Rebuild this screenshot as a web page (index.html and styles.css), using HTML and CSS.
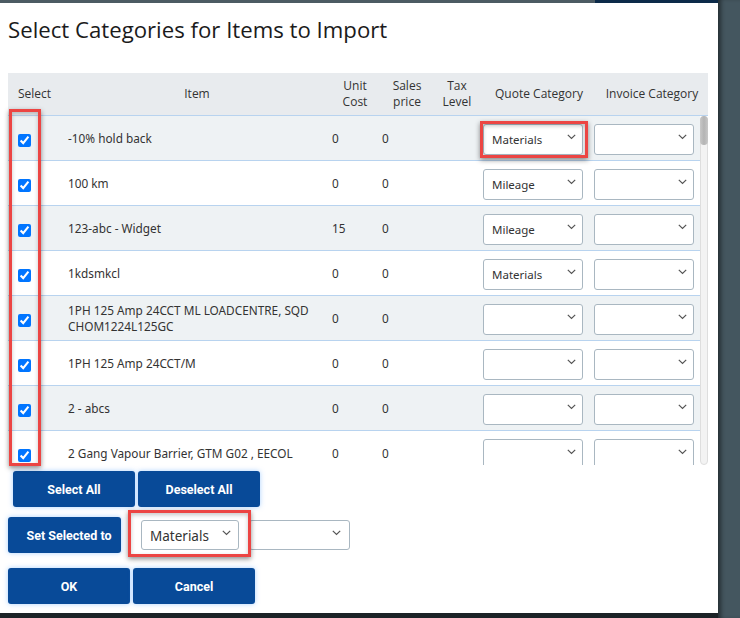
FILE: index.html
```html
<!DOCTYPE html>
<html>
<head>
<meta charset="utf-8">
<link rel="stylesheet" href="styles.css">
</head>
<body>
<div class="screen">
  <div class="main-col">
    <div class="topstrip"></div>
    <div class="dialog">
      <h1 class="title">Select Categories for Items to Import</h1>
      <div class="table">
        <div class="thead">
          <div class="th th-left">Select</div>
          <div class="th">Item</div>
          <div class="th">Unit<br>Cost</div>
          <div class="th">Sales<br>price</div>
          <div class="th">Tax<br>Level</div>
          <div class="th">Quote Category</div>
          <div class="th">Invoice Category</div>
          <div class="th"></div>
        </div>
        <div class="tbody">
          <div class="rows">
            <div class="row">
              <div class="c-sel"><input type="checkbox" checked></div>
              <div class="c-item">-10% hold back</div>
              <div class="c-num">0</div>
              <div class="c-num">0</div>
              <div class="c-num"></div>
              <div class="c-q"><div class="sel"><span>Materials</span><svg width="9" height="6" viewBox="0 0 9 6"><path d="M0.8 0.8 L4.5 4.5 L8.2 0.8" fill="none" stroke="#555" stroke-width="1.2"/></svg></div></div>
              <div class="c-i"><div class="sel"><span></span><svg width="9" height="6" viewBox="0 0 9 6"><path d="M0.8 0.8 L4.5 4.5 L8.2 0.8" fill="none" stroke="#555" stroke-width="1.2"/></svg></div></div>
            </div>
            <div class="row">
              <div class="c-sel"><input type="checkbox" checked></div>
              <div class="c-item">100 km</div>
              <div class="c-num">0</div>
              <div class="c-num">0</div>
              <div class="c-num"></div>
              <div class="c-q"><div class="sel"><span>Mileage</span><svg width="9" height="6" viewBox="0 0 9 6"><path d="M0.8 0.8 L4.5 4.5 L8.2 0.8" fill="none" stroke="#555" stroke-width="1.2"/></svg></div></div>
              <div class="c-i"><div class="sel"><span></span><svg width="9" height="6" viewBox="0 0 9 6"><path d="M0.8 0.8 L4.5 4.5 L8.2 0.8" fill="none" stroke="#555" stroke-width="1.2"/></svg></div></div>
            </div>
            <div class="row">
              <div class="c-sel"><input type="checkbox" checked></div>
              <div class="c-item">123-abc - Widget</div>
              <div class="c-num">15</div>
              <div class="c-num">0</div>
              <div class="c-num"></div>
              <div class="c-q"><div class="sel"><span>Mileage</span><svg width="9" height="6" viewBox="0 0 9 6"><path d="M0.8 0.8 L4.5 4.5 L8.2 0.8" fill="none" stroke="#555" stroke-width="1.2"/></svg></div></div>
              <div class="c-i"><div class="sel"><span></span><svg width="9" height="6" viewBox="0 0 9 6"><path d="M0.8 0.8 L4.5 4.5 L8.2 0.8" fill="none" stroke="#555" stroke-width="1.2"/></svg></div></div>
            </div>
            <div class="row">
              <div class="c-sel"><input type="checkbox" checked></div>
              <div class="c-item">1kdsmkcl</div>
              <div class="c-num">0</div>
              <div class="c-num">0</div>
              <div class="c-num"></div>
              <div class="c-q"><div class="sel"><span>Materials</span><svg width="9" height="6" viewBox="0 0 9 6"><path d="M0.8 0.8 L4.5 4.5 L8.2 0.8" fill="none" stroke="#555" stroke-width="1.2"/></svg></div></div>
              <div class="c-i"><div class="sel"><span></span><svg width="9" height="6" viewBox="0 0 9 6"><path d="M0.8 0.8 L4.5 4.5 L8.2 0.8" fill="none" stroke="#555" stroke-width="1.2"/></svg></div></div>
            </div>
            <div class="row">
              <div class="c-sel"><input type="checkbox" checked></div>
              <div class="c-item">1PH 125 Amp 24CCT ML LOADCENTRE, SQD CHOM1224L125GC</div>
              <div class="c-num">0</div>
              <div class="c-num">0</div>
              <div class="c-num"></div>
              <div class="c-q"><div class="sel"><span></span><svg width="9" height="6" viewBox="0 0 9 6"><path d="M0.8 0.8 L4.5 4.5 L8.2 0.8" fill="none" stroke="#555" stroke-width="1.2"/></svg></div></div>
              <div class="c-i"><div class="sel"><span></span><svg width="9" height="6" viewBox="0 0 9 6"><path d="M0.8 0.8 L4.5 4.5 L8.2 0.8" fill="none" stroke="#555" stroke-width="1.2"/></svg></div></div>
            </div>
            <div class="row">
              <div class="c-sel"><input type="checkbox" checked></div>
              <div class="c-item">1PH 125 Amp 24CCT/M</div>
              <div class="c-num">0</div>
              <div class="c-num">0</div>
              <div class="c-num"></div>
              <div class="c-q"><div class="sel"><span></span><svg width="9" height="6" viewBox="0 0 9 6"><path d="M0.8 0.8 L4.5 4.5 L8.2 0.8" fill="none" stroke="#555" stroke-width="1.2"/></svg></div></div>
              <div class="c-i"><div class="sel"><span></span><svg width="9" height="6" viewBox="0 0 9 6"><path d="M0.8 0.8 L4.5 4.5 L8.2 0.8" fill="none" stroke="#555" stroke-width="1.2"/></svg></div></div>
            </div>
            <div class="row">
              <div class="c-sel"><input type="checkbox" checked></div>
              <div class="c-item">2 - abcs</div>
              <div class="c-num">0</div>
              <div class="c-num">0</div>
              <div class="c-num"></div>
              <div class="c-q"><div class="sel"><span></span><svg width="9" height="6" viewBox="0 0 9 6"><path d="M0.8 0.8 L4.5 4.5 L8.2 0.8" fill="none" stroke="#555" stroke-width="1.2"/></svg></div></div>
              <div class="c-i"><div class="sel"><span></span><svg width="9" height="6" viewBox="0 0 9 6"><path d="M0.8 0.8 L4.5 4.5 L8.2 0.8" fill="none" stroke="#555" stroke-width="1.2"/></svg></div></div>
            </div>
            <div class="row">
              <div class="c-sel"><input type="checkbox" checked></div>
              <div class="c-item">2 Gang Vapour Barrier, GTM G02 , EECOL</div>
              <div class="c-num">0</div>
              <div class="c-num">0</div>
              <div class="c-num"></div>
              <div class="c-q"><div class="sel"><span></span><svg width="9" height="6" viewBox="0 0 9 6"><path d="M0.8 0.8 L4.5 4.5 L8.2 0.8" fill="none" stroke="#555" stroke-width="1.2"/></svg></div></div>
              <div class="c-i"><div class="sel"><span></span><svg width="9" height="6" viewBox="0 0 9 6"><path d="M0.8 0.8 L4.5 4.5 L8.2 0.8" fill="none" stroke="#555" stroke-width="1.2"/></svg></div></div>
            </div>
          </div>
          <div class="scrollbar"><div class="thumb"></div></div>
        </div>
      </div>

      <div class="actions actions-sel">
        <button class="btn">Select All</button>
        <button class="btn">Deselect All</button>
      </div>
      <div class="actions actions-set">
        <button class="btn btn-set">Set Selected to</button>
        <div class="sel sel-lg"><span>Materials</span><svg width="9" height="6" viewBox="0 0 9 6"><path d="M0.8 0.8 L4.5 4.5 L8.2 0.8" fill="none" stroke="#555" stroke-width="1.2"/></svg></div>
        <div class="sel sel-lg sel-lg2"><span></span><svg width="9" height="6" viewBox="0 0 9 6"><path d="M0.8 0.8 L4.5 4.5 L8.2 0.8" fill="none" stroke="#555" stroke-width="1.2"/></svg></div>
      </div>
      <div class="actions actions-ok">
        <button class="btn">OK</button>
        <button class="btn">Cancel</button>
      </div>

      <div class="mark mark-checks"></div>
      <div class="mark mark-quote"></div>
      <div class="mark mark-set"></div>
    </div>
    <div class="under"></div>
  </div>
  <div class="side"></div>
</div>
</body>
</html>
```

FILE: styles.css
```css
html, body {
  margin: 0;
  padding: 0;
}
body {
  background: #44565f;
  font-family: "Noto Sans", "Open Sans", sans-serif;
}
.screen {
  display: flex;
  width: 740px;
  height: 618px;
  overflow: hidden;
}
.main-col {
  width: 718px;
  display: flex;
  flex-direction: column;
}
.topstrip {
  height: 3px;
  flex: none;
  background: linear-gradient(to right, #4c5b63 0, #4c5b63 595px, #0c2a49 595px, #0c2a49 100%);
}
.dialog {
  position: relative;
  height: 610px;
  flex: none;
  background: #fff;
  padding: 0 10px 0 8px;
  box-sizing: border-box;
}
.under {
  flex: 1;
  background: #1c2327;
}
.side {
  flex: 1;
  background: #44565f;
  box-shadow: inset 5px 0 4px -2px rgba(0, 0, 0, 0.45);
}

.title {
  margin: 0;
  padding-top: 12px;
  height: 70px;
  box-sizing: border-box;
  line-height: 30px;
  font-family: "Open Sans", sans-serif;
  font-weight: 500;
  font-size: 22.2px;
  color: #1b1b1b;
}

.table {
  width: 700px;
}
.thead {
  display: grid;
  grid-template-columns: 52px 274px 42px 62px 38px 126px 100px 6px;
  height: 43px;
  box-sizing: border-box;
  background: #e8ebee;
  border-bottom: 1px solid #b8d3ef;
  align-items: center;
}
.th {
  text-align: center;
  font-family: "Open Sans", sans-serif;
  font-weight: 500;
  font-size: 12px;
  line-height: 16px;
  color: #333;
}
.th-left {
  text-align: left;
  padding-left: 10px;
}

.tbody {
  display: flex;
  height: 349px;
}
.rows {
  width: 692px;
  height: 349px;
  overflow: hidden;
}
.row {
  display: grid;
  grid-template-columns: 52px 265px 50px 50px 50px 114px 111px;
  height: 45px;
  box-sizing: border-box;
  border-bottom: 1px solid #b8d3ef;
  align-items: center;
  font-size: 11.8px;
  line-height: 16px;
  color: #333;
}
.row:nth-child(odd) {
  background: #eef2f4;
}
.c-sel {
  padding-left: 10px;
  display: flex;
}
.c-sel input {
  width: 13px;
  height: 13px;
  margin: 4px 0 0 0;
  accent-color: #0075ff;
}
.c-item {
  padding: 0 8px;
  margin-top: -1px;
}
.c-num {
  padding-left: 7px;
  margin-top: -1px;
}
.c-q {
  padding-left: 8px;
  margin-top: 2px;
}
.c-i {
  padding-left: 5px;
  margin-top: 2px;
}
.sel {
  width: 100px;
  height: 31px;
  box-sizing: border-box;
  border: 1px solid #a9b7c1;
  border-radius: 3px;
  background: #fff;
  display: flex;
  align-items: center;
  justify-content: space-between;
  padding: 0 6px 0 8px;
  font-size: 11.5px;
  color: #333;
}
.sel span {
  padding-top: 2px;
}
.sel svg {
  margin-top: -4px;
  flex: none;
}

.scrollbar {
  width: 8px;
  height: 349px;
  box-sizing: border-box;
  background: #f3f3f3;
  border: 1px solid #dedede;
  border-radius: 4px;
}
.thumb {
  height: 29px;
  margin: -1px;
  border-radius: 4px;
  background: linear-gradient(to right, #c8c8c8, #b4b4b4 50%, #c8c8c8);
}

.actions {
  display: flex;
  align-items: center;
}
.actions-sel {
  gap: 3px;
  margin: 6px 0 0 5px;
}
.actions-set {
  margin-top: 10px;
}
.actions-ok {
  gap: 3px;
  margin-top: 15px;
}
.btn {
  width: 122px;
  height: 36px;
  border: 0;
  border-radius: 3px;
  background: #084a98;
  color: #fff;
  font-family: Roboto, "Liberation Sans", sans-serif;
  font-weight: 700;
  font-size: 12.5px;
  padding: 0;
  box-shadow: 0 0 5px rgba(90, 165, 255, 0.5);
}
.btn-set {
  width: 113px;
  padding-left: 9px;
}
.sel-lg {
  width: 98px;
  height: 30px;
  margin-left: 20px;
  font-size: 13.5px;
  padding: 0 7px 0 8px;
}
.sel-lg2 {
  width: 101px;
  margin-left: 10px;
  padding-right: 8px;
}

.mark {
  position: absolute;
  box-sizing: border-box;
  border: 3px solid #ec4543;
  box-shadow: 0 2px 5px rgba(0, 0, 0, 0.45), inset 0 2px 4px rgba(0, 0, 0, 0.22);
  pointer-events: none;
}
.mark-checks {
  left: 9px;
  top: 106px;
  width: 32px;
  height: 357px;
}
.mark-quote {
  left: 480px;
  top: 118px;
  width: 108px;
  height: 37px;
}
.mark-set {
  left: 128px;
  top: 507px;
  width: 123px;
  height: 47px;
}
```
